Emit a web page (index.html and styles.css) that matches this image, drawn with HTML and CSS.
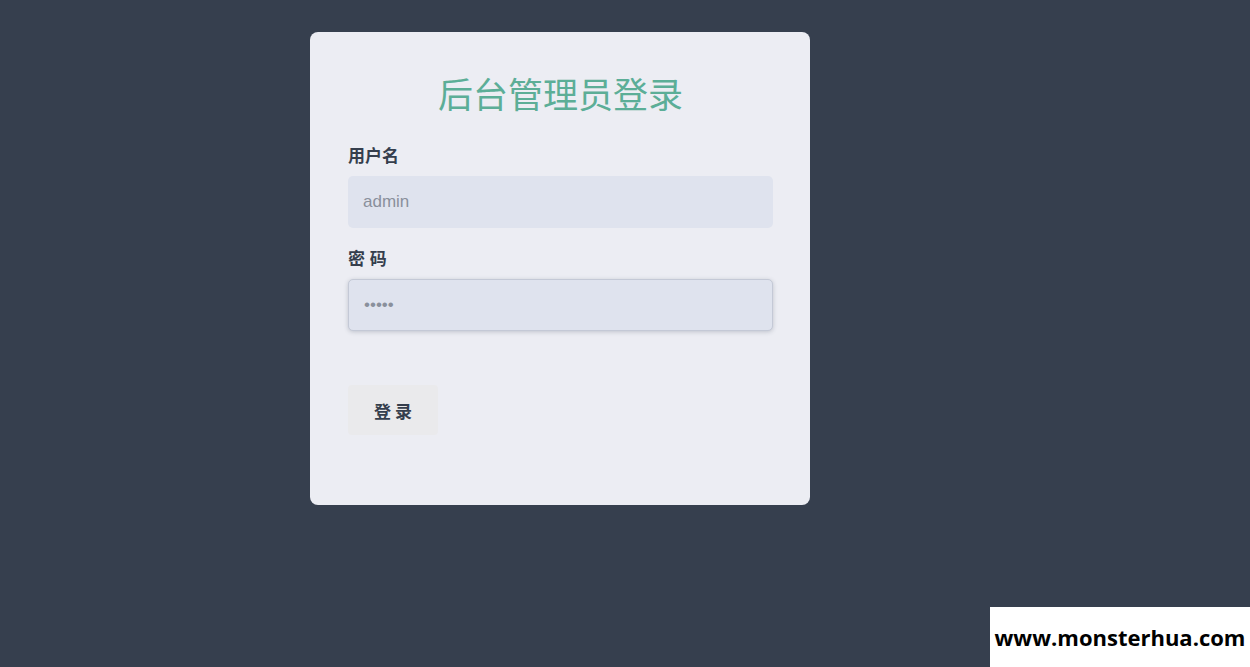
FILE: index.html
```html
<!DOCTYPE html>
<html lang="zh-CN">
<head>
    <meta charset="UTF-8">
    <meta name="viewport" content="width=device-width, initial-scale=1.0">
    <title>后台管理员登录</title>
    <link rel="stylesheet" href="styles.css">
</head>
<body>
    <div class="login-box">
        <h1>后台管理员登录</h1>
        <form action="#" method="POST">
            <label for="username">用户名</label>
            <input type="text" id="username" name="username" placeholder="admin">
            <label for="password">密 码</label>
            <input type="password" id="password" name="password" class="focused" value="admin">
            <button type="submit">登 录</button>
        </form>
    </div>
    <div class="watermark">www.monsterhua.com</div>
</body>
</html>
```

FILE: styles.css
```css
body {
    font-family: "Liberation Sans", "Noto Sans CJK SC", sans-serif;
    margin: 0;
    padding: 0;
    background-color: #363f4e;
    min-height: 100vh;
}
.login-box {
    width: 500px;
    box-sizing: border-box;
    margin: 32px 0 0 310px;
    padding: 39px 37px 70px 38px;
    background-color: #ecedf3;
    border-radius: 8px;
}
h1 {
    margin: 0 0 24px 0;
    text-align: center;
    font-size: 35px;
    font-weight: normal;
    color: #5cae97;
    line-height: 50px;
}
form {
    display: flex;
    flex-direction: column;
    align-items: flex-start;
}
label {
    font-size: 17px;
    font-weight: bold;
    color: #353e4d;
    line-height: 24px;
    margin-bottom: 7px;
}
input[type="text"], input[type="password"] {
    width: 425px;
    height: 52px;
    box-sizing: border-box;
    padding: 0 15px;
    margin: 0 0 20px 0;
    border: none;
    border-radius: 5px;
    background-color: #dfe3ee;
    font-family: "Liberation Sans", sans-serif;
    font-size: 17px;
    color: #8a909c;
    outline: none;
}
input::placeholder {
    color: #8a909c;
}
input.focused {
    border: 1px solid #c4c9d6;
    box-shadow: 0 1px 4px rgba(60, 70, 90, 0.25);
}
button {
    margin-top: 34px;
    width: 90px;
    height: 50px;
    border: none;
    border-radius: 4px;
    background-color: #eaeaec;
    font-family: "Noto Sans CJK SC", sans-serif;
    font-size: 17px;
    font-weight: bold;
    color: #353e4d;
    cursor: pointer;
}
.watermark {
    position: fixed;
    right: 0;
    bottom: 0;
    width: 260px;
    height: 60px;
    background-color: #fff;
    color: #000;
    font-family: "Open Sans", sans-serif;
    font-weight: bold;
    font-size: 22px;
    line-height: 60px;
    text-align: center;
}
```
